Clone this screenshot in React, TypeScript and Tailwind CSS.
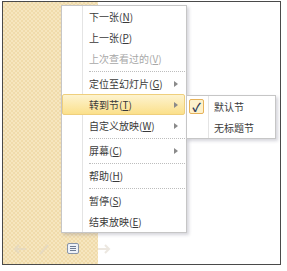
import React from "react";

type Item =
  | { sep: true }
  | { sep?: false; label: string; key: string; disabled?: boolean; sub?: boolean; active?: boolean };

const items: Item[] = [
  { label: "下一张", key: "N" },
  { label: "上一张", key: "P" },
  { label: "上次查看过的", key: "V", disabled: true },
  { sep: true },
  { label: "定位至幻灯片", key: "G", sub: true },
  { label: "转到节", key: "T", sub: true, active: true },
  { label: "自定义放映", key: "W", sub: true },
  { sep: true },
  { label: "屏幕", key: "C", sub: true },
  { sep: true },
  { label: "帮助", key: "H" },
  { sep: true },
  { label: "暂停", key: "S" },
  { label: "结束放映", key: "E" },
];

const font = { fontFamily: '"Noto Sans CJK SC", "Microsoft YaHei", sans-serif' };

function Arrow() {
  return (
    <svg width="4" height="6" viewBox="0 0 4 6" className="absolute left-[112px] top-[8px]">
      <path d="M0 0 L4 3 L0 6 Z" fill="#8a8a8a" />
    </svg>
  );
}

export default function App() {
  return (
    <div className="relative w-[287px] h-[271px] bg-white overflow-hidden" style={font}>
      {/* slide frame */}
      <div className="absolute left-[2px] top-[1px] w-[279px] h-[264px] border border-[#4a4a4a] flex">
        <div className="w-[95px] h-full bg-[#f4e1b5] bg-[repeating-conic-gradient(#f6e6bf_0_25%,#f0dbab_0_50%)] bg-[length:4px_4px]" />
        <div className="flex-1 h-full bg-white" />
      </div>

      {/* bottom toolbar */}
      <svg className="absolute left-[12px] top-[242px]" width="100" height="14" viewBox="0 0 100 14">
        <g opacity="0.55" fill="none" stroke="#ddd5c8" strokeWidth="2">
          <path d="M14 7 H3 M7 3 L3 7 L7 11" />
          <path d="M28 12 L36 3" />
          <path d="M86 7 H97 M93 3 L97 7 L93 11" />
        </g>
        <rect x="55.5" y="1.5" width="11" height="10" rx="1.5" fill="#eef2f8" stroke="#8894a8" />
        <path d="M58 4.5 H64 M58 6.5 H64 M58 8.5 H64" stroke="#6e7b92" strokeWidth="1" />
      </svg>

      {/* main menu */}
      <div className="absolute left-[61px] top-[5px] w-[126px] bg-white border border-[#c6c6c6] shadow-[2px_2px_3px_rgba(120,120,140,0.3)] flex flex-col">
        <div className="absolute left-[20px] top-0 bottom-0 w-px bg-[#e4e4e4]" />
        {items.map((it, i) =>
          it.sep ? (
            <div key={i} className="h-[4px] flex items-center pl-[27px] pr-[1px]">
              <div className="w-full border-t border-dotted border-[#bdbdbd]" />
            </div>
          ) : (
            <div key={i} className="relative h-[21px] flex items-center">
              {it.active && (
                <div className="absolute left-0 right-[1px] top-0 bottom-0 rounded-[2px] border border-[#efcf7c] bg-gradient-to-b from-[#fdf3cf] to-[#fbe08a]" />
              )}
              <span
                className={
                  "relative pl-[27px] text-[10px] leading-none whitespace-nowrap " +
                  (it.disabled ? "text-[#a8a8a8]" : "text-[#3a3a3a]")
                }
              >
                {it.label}(<span className="underline underline-offset-1">{it.key}</span>)
              </span>
              {it.sub && <Arrow />}
            </div>
          )
        )}
      </div>

      {/* submenu */}
      <div className="absolute left-[186px] top-[95px] w-[90px] bg-white border border-[#c6c6c6] shadow-[2px_2px_3px_rgba(120,120,140,0.3)] flex flex-col">
        <div className="absolute left-[21px] top-0 bottom-0 w-px bg-[#e4e4e4]" />
        <div className="relative h-[21px] flex items-center">
          <div className="absolute left-[2px] top-[3px] w-[15px] h-[15px] rounded-[2px] border border-[#e6b25a] bg-[#fdf1cc] flex items-center justify-center text-[12px] font-bold leading-none text-[#2a3a5a]">
            ✓
          </div>
          <span className="pl-[27px] text-[10px] leading-none text-[#3a3a3a]">默认节</span>
        </div>
        <div className="relative h-[21px] flex items-center">
          <span className="pl-[27px] text-[10px] leading-none text-[#3a3a3a]">无标题节</span>
        </div>
      </div>
    </div>
  );
}
